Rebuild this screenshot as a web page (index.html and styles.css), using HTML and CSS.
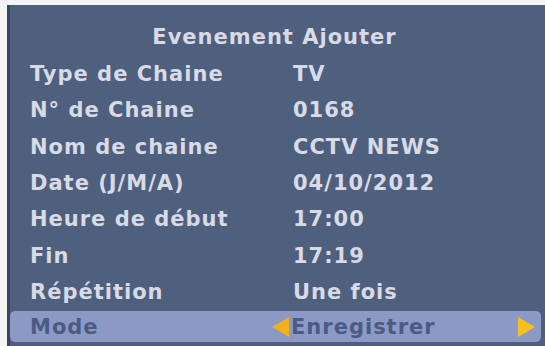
FILE: index.html
```html
<!DOCTYPE html>
<html lang="fr">
<head>
<meta charset="utf-8">
<link rel="stylesheet" href="styles.css">
</head>
<body>
<div class="panel">
  <div class="title">Evenement Ajouter</div>
  <div class="row"><span class="label">Type de Chaine</span><span class="value">TV</span></div>
  <div class="row"><span class="label">N° de Chaine</span><span class="value">0168</span></div>
  <div class="row"><span class="label">Nom de chaine</span><span class="value">CCTV NEWS</span></div>
  <div class="row"><span class="label">Date (J/M/A)</span><span class="value">04/10/2012</span></div>
  <div class="row"><span class="label">Heure de début</span><span class="value">17:00</span></div>
  <div class="row"><span class="label">Fin</span><span class="value">17:19</span></div>
  <div class="row"><span class="label">Répétition</span><span class="value">Une fois</span></div>
  <div class="row selected">
    <span class="label">Mode</span>
    <span class="arrow left"></span>
    <span class="value">Enregistrer</span>
    <span class="arrow right"></span>
  </div>
</div>
</body>
</html>
```
FILE: styles.css
```css
html, body {
  margin: 0;
  padding: 0;
  background: #f4f4f6;
  width: 545px;
  height: 346px;
  overflow: hidden;
}
.panel {
  margin: 5px 0 0 7px;
  height: 341px;
  background: #4f5f7e;
  border-left: 3px solid #3a465f;
  box-sizing: border-box;
  padding-top: 14px;
  font-family: "DejaVu Sans", sans-serif;
  font-weight: bold;
  font-size: 21px;
  letter-spacing: 1px;
  color: #d8dbe6;
}
.title {
  height: 37px;
  line-height: 36px;
  text-align: center;
  padding-right: 6px;
}
.row {
  height: 36.3px;
  line-height: 36px;
  display: flex;
  align-items: center;
  padding-left: 20px;
}
.label {
  width: 263px;
}
.selected {
  background: #8d99c5;
  color: #4c5a83;
  margin: 1px 4px 0 0;
  padding-left: 20px;
  height: 31px;
  border-radius: 5px;
}
.selected .label {
  width: 242px;
}
.arrow {
  width: 0;
  height: 0;
  border-top: 10px solid transparent;
  border-bottom: 10px solid transparent;
}
.arrow.left {
  border-right: 17px solid #f2b01e;
  margin-right: 2px;
}
.arrow.right {
  border-left: 17px solid #f5c11c;
  margin-left: auto;
  margin-right: 6px;
}
```
